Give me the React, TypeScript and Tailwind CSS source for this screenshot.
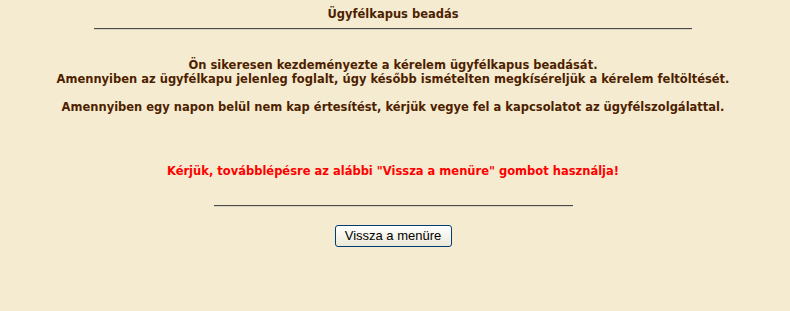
export default function App() {
  const font = { fontFamily: '"DejaVu Sans", Verdana, sans-serif' };
  return (
    <div className="min-h-[311px] bg-[#f5ebd0] text-[#4d1f00]" style={font}>
      <div className="w-[786px] text-center text-[11.5px] font-bold leading-[14px]">
        <div className="pt-[7px]">Ügyfélkapus beadás</div>
        <div className="mx-auto mt-[7px] h-[2px] w-[598px] border-t border-[#4a4a4a] border-b border-b-[#d8d2c0]" />
        <div className="mt-[28px]">
          Ön sikeresen kezdeményezte a kérelem ügyfélkapus beadását.
          <br />
          Amennyiben az ügyfélkapu jelenleg foglalt, úgy később ismételten megkíséreljük a kérelem feltöltését.
          <br />
          <br />
          Amennyiben egy napon belül nem kap értesítést, kérjük vegye fel a kapcsolatot az ügyfélszolgálattal.
        </div>
        <div className="mt-[50px] text-[#ff0000]">
          Kérjük, továbblépésre az alábbi "Vissza a menüre" gombot használja!
        </div>
        <div className="mx-auto mt-[27px] h-[2px] w-[359px] border-t border-[#4a4a4a] border-b border-b-[#d8d2c0]" />
        <div className="mt-[18px] flex justify-center">
          <button
            className="h-[22px] w-[117px] rounded-[3px] border border-[#003c74] bg-gradient-to-b from-[#ffffff] to-[#ece9d8] text-[13px] font-normal text-black"
            style={{ fontFamily: '"Liberation Sans", Arial, sans-serif' }}
          >
            Vissza a menüre
          </button>
        </div>
      </div>
    </div>
  );
}
